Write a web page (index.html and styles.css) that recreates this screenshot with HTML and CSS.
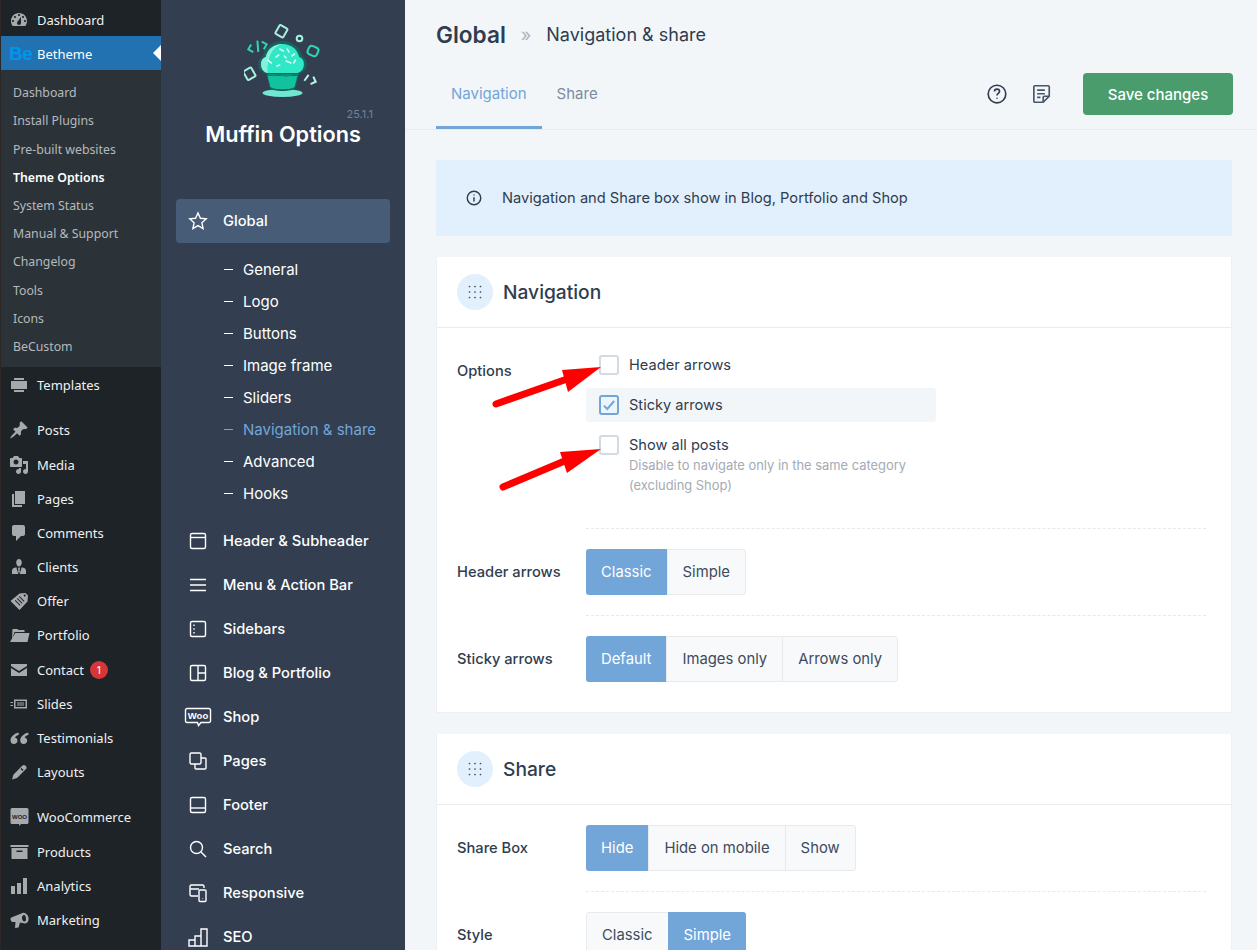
FILE: index.html
```html
<!DOCTYPE html>
<html lang="en">

<head>
  <meta charset="UTF-8">
  <meta name="viewport" content="width=device-width, initial-scale=1.0">
  <title>Muffin Options</title>
  <link rel="stylesheet" href="styles.css">
</head>

<body>
  <div class="page">

    <!-- wordpress menu -->
    <div class="wp">
      <a class="wp-item wp-first"><svg class="wp-ic" viewBox="0 0 20 20"><path fill-rule="evenodd" d="M3.76 16h12.48c1.1-1.37 1.76-3.11 1.76-5 0-4.42-3.58-8-8-8s-8 3.58-8 8c0 1.89.66 3.63 1.76 5zM10 4c.55 0 1 .45 1 1s-.45 1-1 1-1-.45-1-1 .45-1 1-1zM6 6c.55 0 1 .45 1 1s-.45 1-1 1-1-.45-1-1 .45-1 1-1zm8 0c.55 0 1 .45 1 1s-.45 1-1 1-1-.45-1-1 .45-1 1-1zm-5.37 5.55L12 7v6c0 1.1-.9 2-2 2s-2-.9-2-2c0-.57.24-1.08.63-1.45zM4 10c.55 0 1 .45 1 1s-.45 1-1 1-1-.45-1-1 .45-1 1-1zm12 0c.55 0 1 .45 1 1s-.45 1-1 1-1-.45-1-1 .45-1 1-1z"/></svg>Dashboard</a>
      <a class="wp-item wp-current"><span class="be-logo">Be</span>Betheme</a>
      <ul class="wp-sub">
        <li>Dashboard</li>
        <li>Install Plugins</li>
        <li>Pre-built websites</li>
        <li class="on">Theme Options</li>
        <li>System Status</li>
        <li>Manual &amp; Support</li>
        <li>Changelog</li>
        <li>Tools</li>
        <li>Icons</li>
        <li>BeCustom</li>
      </ul>
      <a class="wp-item"><svg class="wp-ic" viewBox="0 0 20 20"><path d="M5 3h10v2H5zM2 6h16v8H2zM5 15h10v2H5z"/></svg>Templates</a>
      <div class="wp-sep"></div>
      <a class="wp-item"><svg class="wp-ic" viewBox="0 0 20 20"><path d="M10.44 3.02l1.82-1.82 6.36 6.35-1.83 1.82c-1.05-.68-2.48-.57-3.41.36l-.75.75c-.92.93-1.04 2.35-.35 3.41l-1.83 1.82-2.41-2.41-2.8 2.79c-.42.42-3.38 2.71-3.8 2.29s1.86-3.39 2.28-3.81l2.79-2.79L4.1 9.36l1.83-1.82c1.05.69 2.48.57 3.4-.36l.75-.75c.93-.92 1.05-2.35.36-3.41z"/></svg>Posts</a>
      <a class="wp-item"><svg class="wp-ic" viewBox="0 0 20 20"><path fill-rule="evenodd" d="M13 11V4c0-.55-.45-1-1-1h-1.67L9 1H5L3.67 3H2c-.55 0-1 .45-1 1v7c0 .55.45 1 1 1h10c.55 0 1-.45 1-1zM7 4.5c1.38 0 2.5 1.12 2.5 2.5S8.38 9.5 7 9.5 4.5 8.38 4.5 7 5.62 4.5 7 4.5zM14 6h5v10.5c0 1.38-1.12 2.5-2.5 2.5S14 17.88 14 16.5s1.12-2.5 2.5-2.5c.17 0 .34.02.5.05V9h-3V6zm-4 8.05V13h2v3.5c0 1.38-1.12 2.5-2.5 2.5S7 17.88 7 16.5 8.12 14 9.5 14c.17 0 .34.02.5.05z"/></svg>Media</a>
      <a class="wp-item"><svg class="wp-ic" viewBox="0 0 20 20"><path d="M6 15V2h10v13H6zm-1 1h8v2H3V5h2v11z"/></svg>Pages</a>
      <a class="wp-item"><svg class="wp-ic" viewBox="0 0 20 20"><path d="M5 2h9c1.1 0 2 .9 2 2v7c0 1.1-.9 2-2 2h-2l-5 5v-5H5c-1.1 0-2-.9-2-2V4c0-1.1.9-2 2-2z"/></svg>Comments</a>
      <a class="wp-item"><svg class="wp-ic" viewBox="0 0 20 20"><path d="M7.2 5.5C7.2 3.6 8.4 2 10 2s2.8 1.6 2.8 3.5S11.6 9.5 10 9.5 7.2 7.4 7.2 5.5zM3 17v-3.5c0-1.8 2-3 4.3-3.3L9.3 17zM17 17v-3.5c0-1.8-2-3-4.3-3.3L10.7 17zM9.3 10.5h1.4l.4 1.5-.6.6.5 3h-2l.5-3-.6-.6z"/></svg>Clients</a>
      <a class="wp-item"><svg class="wp-ic wp-ic-big" viewBox="0 0 20 20"><path fill-rule="evenodd" d="M10 2.5l6-.5 2.500 2.500-.5 6L10 19 1 10zM15.200 3.500a1 1 0 1 0 .01 0zM8 7l-.7.7 5 5 .7-.7zM6 9l-.7.7 5 5 .7-.7zM10 5l-.7.7 5 5 .7-.7z"/></svg>Offer</a>
      <a class="wp-item"><svg class="wp-ic wp-ic-big" viewBox="0 0 20 20"><path d="M3 4h5l1 1h6v2H5L2.500 14zM5.700 8H20l-2 9H0.500z"/></svg>Portfolio</a>
      <a class="wp-item"><svg class="wp-ic" viewBox="0 0 20 20"><path d="M2 4h16v2l-8 5-8-5zM2 8l8 5 8-5v8H2z"/></svg>Contact<span class="wp-badge">1</span></a>
      <a class="wp-item"><svg class="wp-ic" viewBox="0 0 20 20"><path fill-rule="evenodd" d="M5 5.500h13v9H5zM6.500 7v6h10V7zM8 8.500h7v1H8zM8 10.500h7v1H8zM1.500 8H4v1H1.500zM1.500 11H4v1H1.500z"/></svg>Slides</a>
      <a class="wp-item"><svg class="wp-ic wp-ic-big" viewBox="0 0 20 20"><path d="M9 4.500C5 5.500 1 8.500 1 12.500 1 15 2.700 16 4.500 16 6.400 16 8 14.500 8 12.700 8 11 6.800 9.800 5.300 9.600 5.800 8.500 7.500 7.300 9.400 6.800zM18.700 4.500c-4 1-8 4-8 8 0 2.500 1.700 3.500 3.500 3.500 1.900 0 3.500-1.500 3.500-3.300 0-1.700-1.200-2.900-2.700-3.100.5-1.100 2.200-2.300 4.100-2.800z"/></svg>Testimonials</a>
      <a class="wp-item"><svg class="wp-ic" viewBox="0 0 20 20"><path d="M13.500 3.500c.8-.8 2-.8 2.800 0l.7.7c.8.8.8 2 0 2.800L8 16l-5 1.500L4.500 12.500zM12.500 6l-1 1 2 2 1-1z"/></svg>Layouts</a>
      <div class="wp-sep"></div>
      <a class="wp-item"><svg class="wp-ic wp-ic-big" viewBox="0 0 20 20"><path d="M2.500 1h15A1.500 1.500 0 0 1 19 2.500v13a1.500 1.500 0 0 1-1.500 1.500H11.500l-1.500 2-.5-2H2.500A1.500 1.500 0 0 1 1 15.500v-13A1.500 1.500 0 0 1 2.500 1z"/><text class="wp-woo" x="10" y="11.500">WOO</text></svg>WooCommerce</a>
      <a class="wp-item"><svg class="wp-ic wp-ic-big" viewBox="0 0 20 20"><path fill-rule="evenodd" d="M19 3v2H1V3zM2 6h16v11H2zM7 8.500V10h6V8.500z"/></svg>Products</a>
      <a class="wp-item"><svg class="wp-ic" viewBox="0 0 20 20"><path d="M18 18V2h-4v16zm-6 0V7H8v11zm-6 0v-8H2v8z"/></svg>Analytics</a>
      <a class="wp-item"><svg class="wp-ic wp-ic-big" viewBox="0 0 20 20"><path fill-rule="evenodd" d="M1 9c0-1 .5-1.500 1.500-1.800L13 3c2.500-1 5.500 1.500 6 4.500s-1 6-3.500 6c-1 0-5-1-5-1l-1.500 5-3.500.5L6 12 3 12C2 12 1 10.500 1 9zM14.500 5c-1.500 0-2 1.500-2 3s.9 3.500 2.400 3.500 1.700-1.600 1.500-3.200S15.800 5 14.500 5z"/></svg>Marketing</a>
    </div>

    <!-- muffin sidebar -->
    <div class="side">
      <div class="logo">
        <svg width="78" height="76" viewBox="245 22 78 76">
          <ellipse cx="283.500" cy="93" rx="20" ry="4" fill="#6fe8cf"/>
          <g transform="translate(283.500 66) scale(.93 1) translate(-284 -66)">
            <path d="M267 74c-7-2-9-5-9-10 0-4 2-6 5-8 2-9 11-15 21-15s19 6 21 15c3 2 5 4 5 8 0 5-3 8-8 10l-4 14c-3 4-25 4-28 0z" fill="#17645c"/>
            <path d="M268 76l3 11c3 3 23 3 26 0l3-11z" fill="#12c19e"/>
            <path d="M268 76c3-2 5 1 8 0s5-1 8 0 5 1 8 0 5-2 8 0l.5-2h-33z" fill="#0e8f78"/>
            <path d="M268 73c-5-1-7-5-7-9s2-6 5-7c2-8 9-13 18-13s16 5 18 13c3 1 5 3 5 7s-2 8-7 9z" fill="#30e8c6"/>
            <path d="M268 73c-5-1-7-5-7-9s2-6 5-7c2-8 9-13 18-13-12 3-17 15-16 29z" fill="#86f0dc"/>
            <path d="M281 49l4 2M289 49l2 3M280 55l-3 2M286 56l2 2M294 56l3-2M268 60l4 3M288 61l5 2M296 63l2-3M281 65l-3 1" stroke="#d8fbf4" stroke-width="1.600" stroke-linecap="round"/>
          </g>
          <g fill="none" stroke="#a5f0e0" stroke-width="2">
            <rect x="278" y="26" width="9" height="10" rx="1" transform="rotate(30 282 31)"/>
            <circle cx="300.500" cy="38.500" r="2.800"/>
            <rect x="246" y="69" width="9" height="10" rx="1" transform="rotate(-30 250 74)"/>
          </g>
          <rect x="309" y="46.500" width="10" height="9" rx="3" fill="none" stroke="#2fd6b6" stroke-width="2" transform="rotate(25 314 51)"/>
          <path d="M253 43l-4 4 4 4M260 41l-2 11M264 43l4 4-4 4" fill="none" stroke="#2fd6b6" stroke-width="2" transform="rotate(-15 258 47)"/>
          <path d="M308 76l-2 7M313 76l4 4-4 4" fill="none" stroke="#b9f5e8" stroke-width="2" transform="rotate(20 312 80)"/>
        </svg>
      </div>
      <div class="version">25.1.1</div>
      <div class="side-title">Muffin Options</div>

      <ul class="side-nav">
        <li class="side-item active">
          <svg class="side-ic" viewBox="0 0 20 20"><path d="M10 2l2.400 5.300 5.800.6-4.300 3.900 1.200 5.700-5.100-2.900-5.100 2.900 1.200-5.700-4.300-3.900 5.800-.6z"/></svg>Global
        </li>
        <li>
          <ul class="side-sub">
            <li>General</li>
            <li>Logo</li>
            <li>Buttons</li>
            <li>Image frame</li>
            <li>Sliders</li>
            <li class="on">Navigation &amp; share</li>
            <li>Advanced</li>
            <li>Hooks</li>
          </ul>
        </li>
        <li class="side-item"><svg class="side-ic" viewBox="0 0 20 20"><rect x="2.500" y="2.500" width="15" height="15" rx="1.500"/><path d="M2.500 6.500h15"/></svg>Header &amp; Subheader</li>
        <li class="side-item"><svg class="side-ic" viewBox="0 0 20 20"><path d="M2 4.500h16M2 10h16M2 15.500h16"/></svg>Menu &amp; Action Bar</li>
        <li class="side-item"><svg class="side-ic" viewBox="0 0 20 20"><rect x="2.500" y="2.500" width="15" height="15" rx="1.500"/><path d="M6 5.500V7M6 9.300v1.500M6 13v1.500"/></svg>Sidebars</li>
        <li class="side-item"><svg class="side-ic" viewBox="0 0 20 20"><rect x="2.500" y="2.500" width="15" height="15" rx="1.500"/><path d="M10 2.500v15M10 10h7.500"/></svg>Blog &amp; Portfolio</li>
        <li class="side-item"><svg class="side-ic side-ic-woo" viewBox="0 0 28 20"><path d="M3 1.500h22A1.500 1.500 0 0 1 26.500 3v11a1.500 1.500 0 0 1-1.500 1.500H17l-2.500 3-1-3H3A1.500 1.500 0 0 1 1.500 14V3A1.500 1.500 0 0 1 3 1.500z"/><text class="side-woo" x="14" y="12">Woo</text></svg>Shop</li>
        <li class="side-item"><svg class="side-ic" viewBox="0 0 20 20"><rect x="2" y="2" width="11" height="11" rx="1.500"/><path d="M13 7h4a1 1 0 0 1 1 1v9a1 1 0 0 1-1 1H8a1 1 0 0 1-1-1v-4"/></svg>Pages</li>
        <li class="side-item"><svg class="side-ic" viewBox="0 0 20 20"><rect x="2.500" y="2.500" width="15" height="15" rx="1.500"/><path d="M2.500 13h15"/></svg>Footer</li>
        <li class="side-item"><svg class="side-ic" viewBox="0 0 20 20"><circle cx="8.500" cy="8.500" r="6"/><path d="M13 13l5 5"/></svg>Search</li>
        <li class="side-item"><svg class="side-ic" viewBox="0 0 20 20"><path d="M16 5V3.500A1.500 1.500 0 0 0 14.500 2h-11A1.500 1.500 0 0 0 2 3.500v8A1.500 1.500 0 0 0 3.500 13H10M2 6h9"/><rect x="11" y="7" width="7" height="11.500" rx="1"/><path d="M14.500 15.500v.5"/></svg>Responsive</li>
        <li class="side-item"><svg class="side-ic" viewBox="0 0 20 20"><path d="M1 13h6v6H1zM7 9h6v10H7zM13 2h6v17h-6z"/></svg>SEO</li>
      </ul>
    </div>

    <!-- main column -->
    <div class="main">
      <div class="top">
        <div class="crumbs"><b>Global</b><i>»</i><span>Navigation &amp; share</span></div>
        <div class="top-bar">
          <ul class="tabs">
            <li class="active">Navigation</li>
            <li>Share</li>
          </ul>
          <div class="top-actions">
            <svg class="top-ic" viewBox="0 0 20 20"><circle cx="10" cy="10" r="8"/><path d="M7.700 7.800c0-1.400 1-2.200 2.300-2.200s2.300.8 2.300 2c0 1.900-2.300 1.900-2.300 3.700M10 13.400v1"/></svg>
            <svg class="top-ic note" viewBox="0 0 20 20"><path d="M17.500 12V3.500a1 1 0 0 0-1-1h-12a1 1 0 0 0-1 1v13a1 1 0 0 0 1 1H12zM12 17.500V13a1 1 0 0 1 1-1h4.500M6.500 6.500h7M6.500 9.800h7M6.500 13h3"/></svg>
            <button class="save">Save changes</button>
          </div>
        </div>
      </div>

      <div class="content">
        <div class="info">
          <svg class="info-ic" viewBox="0 0 20 20"><circle cx="10" cy="10" r="7.500"/><path d="M10 9.300v4.500M10 6.200v1"/></svg>
          Navigation and Share box show in Blog, Portfolio and Shop
        </div>

        <div class="card">
          <div class="card-head">
            <span class="dots"><svg viewBox="0 0 14 14"><path d="M1.500 1.500h.01M7 1.500h.01M12.500 1.500h.01M1.500 7h.01M7 7h.01M12.500 7h.01M1.500 12.500h.01M7 12.500h.01M12.500 12.500h.01"/></svg></span>
            <h2>Navigation</h2>
          </div>
          <div class="row">
            <div class="label">Options</div>
            <div class="ctrl ctrl-opts">
              <div class="opt"><span class="check"></span>Header arrows</div>
              <div class="opt checked"><span class="check"><svg viewBox="0 0 14 14"><path d="M2.500 7.500l3 3 6-7"/></svg></span>Sticky arrows</div>
              <div class="opt"><span class="check"></span>Show all posts</div>
              <div class="opt-desc">Disable to navigate only in the same category<br>(excluding Shop)</div>
            </div>
          </div>
          <div class="row">
            <div class="label">Header arrows</div>
            <div class="ctrl">
              <div class="seg"><span class="active">Classic</span><span>Simple</span></div>
            </div>
          </div>
          <div class="row">
            <div class="label">Sticky arrows</div>
            <div class="ctrl">
              <div class="seg"><span class="active">Default</span><span>Images only</span><span>Arrows only</span></div>
            </div>
          </div>
        </div>

        <div class="card">
          <div class="card-head">
            <span class="dots"><svg viewBox="0 0 14 14"><path d="M1.500 1.500h.01M7 1.500h.01M12.500 1.500h.01M1.500 7h.01M7 7h.01M12.500 7h.01M1.500 12.500h.01M7 12.500h.01M12.500 12.500h.01"/></svg></span>
            <h2>Share</h2>
          </div>
          <div class="row">
            <div class="label">Share Box</div>
            <div class="ctrl">
              <div class="seg"><span class="active">Hide</span><span>Hide on mobile</span><span>Show</span></div>
            </div>
          </div>
          <div class="row">
            <div class="label">Style</div>
            <div class="ctrl">
              <div class="seg"><span>Classic</span><span class="active">Simple</span></div>
            </div>
          </div>
        </div>
      </div>
    </div>

    <!-- red arrows drawn over the screenshot -->
    <svg class="marks" viewBox="0 0 1257 950">
      <path d="M496 404L570 378" stroke="#f00" stroke-width="7" stroke-linecap="round"/>
      <path d="M601 367L562 370 568 392z" fill="#f00"/>
      <path d="M503 487L567 460" stroke="#f00" stroke-width="7" stroke-linecap="round"/>
      <path d="M601 449L560 452 567 473z" fill="#f00"/>
    </svg>
  </div>
</body>

</html>
```

FILE: styles.css
```css
* {
  margin: 0;
  padding: 0;
  box-sizing: border-box;
}

html,
body {
  height: 950px;
  overflow: hidden;
}

ul {
  list-style: none;
}

.page {
  position: relative;
  display: grid;
  grid-template-columns: 161px 244px 1fr;
  height: 950px;
  font-family: Inter, "Noto Sans", sans-serif;
  color: #2f3d4f;
  background: #f3f6f9;
}

/* wordpress menu */
.wp {
  background: #1d2327;
  border-left: 1px solid #2b2727;
  padding-top: 2px;
  font-family: "Noto Sans", sans-serif;
  font-size: 13px;
  color: #f0f0f1;
}

.wp-item {
  position: relative;
  display: flex;
  align-items: center;
  height: 34.2px;
}

.wp-first {
  padding-top: 1px;
}

.wp-ic {
  flex: none;
  width: 20px;
  height: 20px;
  margin: 0 8px;
  fill: #a7aaad;
}

.wp-ic-big {
  width: 21px;
  margin: 0 7px 0 8px;
}

.wp-woo {
  font: 700 6px "Liberation Sans", sans-serif;
  fill: #1d2327;
  text-anchor: middle;
}

.wp-current {
  height: 34px;
  padding-top: 1px;
  background: #2271b1;
  color: #fff;
}

.wp-current::after {
  content: "";
  position: absolute;
  right: 0;
  top: 9px;
  border: 8px solid transparent;
  border-right-color: #fff;
  border-left-width: 0;
}

.be-logo {
  flex: none;
  width: 36px;
  padding-left: 8px;
  color: #0095eb;
  font: 700 19px/1 "Liberation Sans", sans-serif;
  letter-spacing: -.5px;
}

.wp-sub {
  background: #2c3338;
  padding: 9px 0 6px;
  margin-bottom: 1px;
  font-size: 12.3px;
}

.wp-sub li {
  height: 28.2px;
  line-height: 28px;
  padding-left: 12px;
  color: #b4b9be;
}

.wp-sub li.on {
  color: #fff;
  font-weight: 600;
}

.wp-sep {
  height: 11px;
}

.wp-badge {
  width: 18px;
  height: 18px;
  margin-left: 6px;
  border-radius: 50%;
  background: #d63638;
  color: #fff;
  font-size: 11px;
  line-height: 18px;
  text-align: center;
}

/* muffin sidebar */
.side {
  background: #333f50;
  color: #fff;
  padding: 0 15px;
}

.logo {
  padding-top: 22px;
  height: 98px;
  text-align: center;
  line-height: 0;
}

.version {
  margin-top: 9px;
  padding-right: 17px;
  text-align: right;
  font-size: 11px;
  line-height: 14px;
  color: #6e829c;
}

.side-title {
  margin-top: -1px;
  text-align: center;
  font-size: 21.7px;
  font-weight: 600;
  line-height: 28px;
}

.side-nav {
  margin-top: 51px;
  font-size: 14.7px;
  font-weight: 500;
}

.side-item {
  display: flex;
  align-items: center;
  height: 44px;
  padding-left: 12px;
}

.side-item.active {
  background: #465c77;
  border-radius: 4px;
}

.side-ic {
  flex: none;
  width: 20px;
  height: 20px;
  margin-right: 15px;
  fill: none;
  stroke: #fff;
  stroke-width: 1.4;
}

.side-ic-woo {
  width: 28px;
  margin-left: -4px;
  margin-right: 11px;
}

.side-woo {
  font: 700 9.5px "Liberation Sans", sans-serif;
  fill: #fff;
  stroke: none;
  text-anchor: middle;
}

.side-sub {
  padding: 10px 0;
}

.side-sub li {
  display: flex;
  align-items: center;
  height: 32px;
  padding-left: 67px;
  font-size: 15px;
  font-weight: 400;
  color: #fff;
}

.side-sub li::before {
  content: "";
  width: 9px;
  height: 1px;
  margin-left: -19px;
  margin-right: 10px;
  background: #fff;
}

.side-sub li.on {
  color: #72a5d8;
}

.side-sub li.on::before {
  background: #72a5d8;
}

/* main column */
.main {
  min-width: 0;
}

.top {
  height: 130px;
  padding: 0 24px 0 31px;
  border-bottom: 1px solid #e7ebef;
}

.crumbs {
  display: flex;
  align-items: center;
  height: 68px;
}

.crumbs b {
  font-size: 22.6px;
  font-weight: 600;
}

.crumbs i {
  margin: 0 15px;
  font-style: normal;
  font-size: 18px;
  color: #a9b4c0;
}

.crumbs span {
  font-size: 18px;
}

.top-bar {
  display: flex;
  justify-content: space-between;
  align-items: flex-start;
}

.tabs {
  display: flex;
  font-size: 15px;
}

.tabs li {
  height: 61px;
  line-height: 52px;
  padding: 0 15px;
  color: #7c8ba1;
}

.tabs li.active {
  color: #72a5d8;
  border-bottom: 3px solid #72a5d8;
}

.top-actions {
  display: flex;
  align-items: center;
  height: 52px;
}

.top-ic {
  width: 22px;
  height: 22px;
  margin-right: 22px;
  fill: none;
  stroke: #2f3d4f;
  stroke-width: 1.5;
}

.top-ic.note {
  margin-right: 31px;
  stroke: #47566a;
}

.save {
  width: 150px;
  height: 42px;
  border: 0;
  border-radius: 4px;
  background: #4a9c6d;
  color: #fff;
  font: 500 15px Inter, sans-serif;
}

.content {
  padding: 30px 25px 0 31px;
}

.info {
  display: flex;
  align-items: center;
  height: 76px;
  padding-left: 29px;
  background: #e2f0fd;
  font-size: 14.65px;
}

.info-ic {
  width: 18px;
  height: 18px;
  margin-right: 19px;
  fill: none;
  stroke: #2f3d4f;
  stroke-width: 1.6;
}

.card {
  margin-top: 21px;
  padding-bottom: 10px;
  background: #fff;
  border: 1px solid #eceff3;
  border-width: 0 1px 1px;
}

.card-head {
  display: flex;
  align-items: center;
  height: 71px;
  padding-left: 20px;
  border-bottom: 1px solid #e9ecef;
}

.card-head h2 {
  margin-left: 10px;
  font-size: 19.2px;
  font-weight: 500;
}

.dots {
  display: flex;
  align-items: center;
  justify-content: center;
  width: 36px;
  height: 36px;
  border-radius: 50%;
  background: #e2f0fd;
}

.dots svg {
  width: 14px;
  height: 14px;
  fill: none;
  stroke: #3d4b5d;
  stroke-width: 1.7;
  stroke-linecap: round;
}

.row {
  display: grid;
  grid-template-columns: 129px 1fr;
  padding: 0 25px 0 20px;
}

.label {
  padding-top: 35px;
  font-size: 14.7px;
  font-weight: 500;
}

.row:nth-child(2) .label {
  padding-top: 34px;
}

.ctrl {
  padding: 20px 0;
  border-top: 1px dashed #e6e9ed;
}

.row:nth-child(2) .ctrl {
  border-top: 0;
}

.ctrl-opts {
  padding-bottom: 32px;
}

.opt {
  display: flex;
  align-items: center;
  width: 350px;
  height: 34px;
  padding-left: 13px;
  margin-bottom: 6px;
  font-size: 14.6px;
  border-radius: 3px;
}

.opt.checked {
  background: #f3f6f9;
}

.check {
  flex: none;
  width: 20px;
  height: 20px;
  margin-right: 10px;
  border: 2px solid #d3dae2;
  border-radius: 3px;
  background: #fff;
}

.checked .check {
  border-color: #72a5d8;
  background: #eef4fb;
}

.check svg {
  display: block;
  width: 16px;
  height: 16px;
  fill: none;
  stroke: #72a5d8;
  stroke-width: 1.7;
}

.opt-desc {
  margin-top: -12px;
  padding-left: 43px;
  font-size: 12.9px;
  line-height: 20px;
  color: #a5abb5;
}

.seg {
  display: inline-flex;
  height: 46px;
  font-size: 14.85px;
  background: #f8f9fa;
  border: 1px solid #e8ebee;
  border-radius: 3px;
}

.seg span {
  padding: 0 15px;
  line-height: 44px;
  border-left: 1px solid #e8ebee;
  color: #3d4b5d;
}

.seg span:first-child {
  border-left: 0;
}

.seg .active {
  margin: -1px 0;
  line-height: 46px;
  background: #72a5d8;
  border-color: #72a5d8;
  color: #fff;
}

.seg .active:first-child {
  margin-left: -1px;
  border-radius: 3px 0 0 3px;
}

.seg .active:last-child {
  margin-right: -1px;
  border-radius: 0 3px 3px 0;
}

.marks {
  position: absolute;
  left: 0;
  top: 0;
  width: 1257px;
  height: 950px;
  pointer-events: none;
}
```
